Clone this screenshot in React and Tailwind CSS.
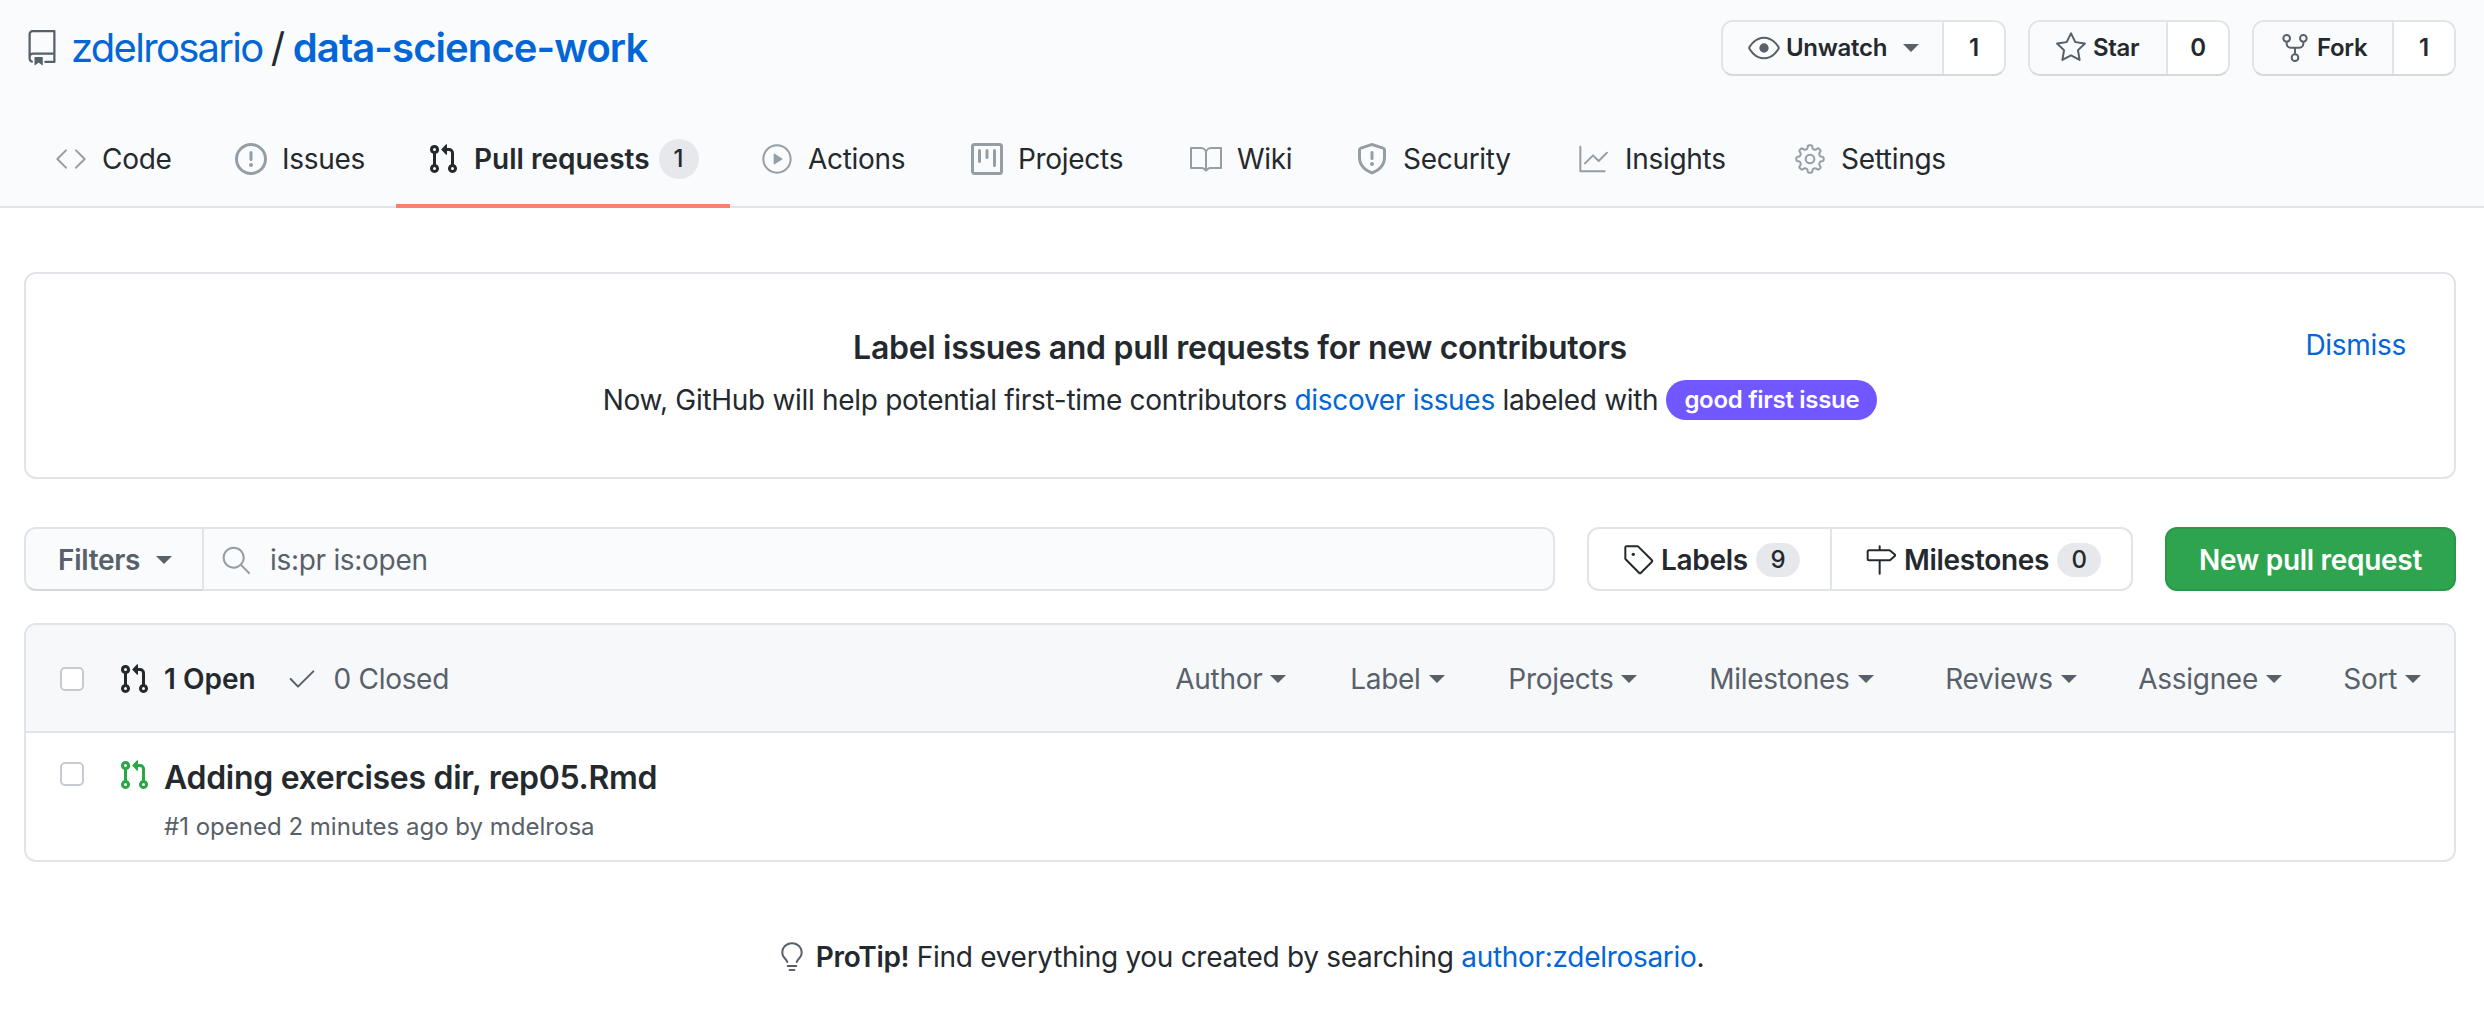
import {
  GoRepo, GoEye, GoStar, GoRepoForked, GoCode, GoPlay,
  GoBook, GoGraph, GoGear, GoTag, GoMilestone, GoSearch, GoCheck, GoLightBulb,
} from "react-icons/go";

// older octicon shapes, the ones in the package have changed since
function IssueIcon({ className, size }) {
  return (
    <svg className={className} width={size} height={size} viewBox="0 0 16 16" fill="currentColor">
      <path fillRule="evenodd" d="M8 1.5a6.5 6.5 0 100 13 6.5 6.5 0 000-13zM0 8a8 8 0 1116 0A8 8 0 010 8zm9 3a1 1 0 11-2 0 1 1 0 012 0zm-.25-6.25a.75.75 0 00-1.5 0v3.5a.75.75 0 001.5 0v-3.5z" />
    </svg>
  );
}

function ProjectIcon({ className, size }) {
  return (
    <svg className={className} width={size} height={size} viewBox="0 0 16 16" fill="currentColor">
      <path fillRule="evenodd" d="M1.75 0A1.75 1.75 0 000 1.75v12.5C0 15.216.784 16 1.75 16h12.5A1.75 1.75 0 0016 14.25V1.75A1.75 1.75 0 0014.25 0H1.75zM1.5 1.75a.25.25 0 01.25-.25h12.5a.25.25 0 01.25.25v12.5a.25.25 0 01-.25.25H1.75a.25.25 0 01-.25-.25V1.75zM11.75 3a.75.75 0 00-.75.75v7.5a.75.75 0 001.5 0v-7.5a.75.75 0 00-.75-.75zm-8.25.75a.75.75 0 011.5 0v5.5a.75.75 0 01-1.5 0v-5.5zM8 3a.75.75 0 00-.75.75v3.5a.75.75 0 001.5 0v-3.5A.75.75 0 008 3z" />
    </svg>
  );
}

function ShieldIcon({ className, size }) {
  return (
    <svg className={className} width={size} height={size} viewBox="0 0 16 16" fill="currentColor">
      <path fillRule="evenodd" d="M7.467.133a1.75 1.75 0 011.066 0l5.25 1.68A1.75 1.75 0 0115 3.48V7c0 1.566-.32 3.182-1.303 4.682-.983 1.498-2.585 2.813-5.032 3.855a1.7 1.7 0 01-1.33 0c-2.447-1.042-4.049-2.357-5.032-3.855C1.32 10.182 1 8.566 1 7V3.48a1.75 1.75 0 011.217-1.667l5.25-1.68zm.61 1.429a.25.25 0 00-.153 0l-5.25 1.68a.25.25 0 00-.174.238V7c0 1.358.275 2.666 1.057 3.86.784 1.194 2.121 2.34 4.366 3.297a.2.2 0 00.154 0c2.245-.956 3.582-2.104 4.366-3.298C13.225 9.666 13.5 8.36 13.5 7V3.48a.25.25 0 00-.174-.237l-5.25-1.68zM9 10.5a1 1 0 11-2 0 1 1 0 012 0zm-.25-5.75a.75.75 0 10-1.5 0v3a.75.75 0 001.5 0v-3z" />
    </svg>
  );
}

function PullIcon({ className, size }) {
  return (
    <svg className={className} width={size} height={size} viewBox="0 0 16 16" fill="currentColor">
      <path fillRule="evenodd" d="M7.177 3.073L9.573.677A.25.25 0 0110 .854v4.792a.25.25 0 01-.427.177L7.177 3.427a.25.25 0 010-.354zM3.75 2.5a.75.75 0 100 1.5.75.75 0 000-1.5zm-2.25.75a2.25 2.25 0 113 2.122v5.256a2.251 2.251 0 11-1.5 0V5.372A2.25 2.25 0 011.5 3.25zM11 2.5h-1V4h1a1 1 0 011 1v5.628a2.251 2.251 0 101.5 0V5A2.5 2.5 0 0011 2.5zm1 10.25a.75.75 0 111.5 0 .75.75 0 01-1.5 0zM3.75 12a.75.75 0 100 1.5.75.75 0 000-1.5z" />
    </svg>
  );
}

const tabs = [
  { label: "Code", icon: GoCode, width: "w-[180px]" },
  { label: "Issues", icon: IssueIcon, width: "w-[192px]" },
  { label: "Pull requests", icon: PullIcon, count: 1, active: true, width: "w-[334px]" },
  { label: "Actions", icon: GoPlay, width: "w-[210px]" },
  { label: "Projects", icon: ProjectIcon, width: "w-[219px]" },
  { label: "Wiki", icon: GoBook, width: "w-[166px]" },
  { label: "Security", icon: ShieldIcon, width: "w-[222px]" },
  { label: "Insights", icon: GoGraph, width: "w-[216px]" },
  { label: "Settings", icon: GoGear, width: "w-[216px]" },
];

const repoActions = [
  { label: "Unwatch", icon: GoEye, count: 1, caret: true, width: "w-[221px]" },
  { label: "Star", icon: GoStar, count: 0, width: "w-[138px]" },
  { label: "Fork", icon: GoRepoForked, count: 1, width: "w-[140px]" },
];

const filters = [
  { label: "Author", width: "w-[175px]" },
  { label: "Label", width: "w-[158px]" },
  { label: "Projects", width: "w-[201px]" },
  { label: "Milestones", width: "w-[236px]" },
  { label: "Reviews", width: "w-[193px]" },
  { label: "Assignee", width: "w-[205px]" },
  { label: "Sort", width: "" },
];

function Caret({ className }) {
  return <span className={`inline-block w-0 h-0 border-x-[8px] border-x-transparent border-t-[8px] ${className}`} />;
}

function RepoAction({ label, icon: Icon, count, caret, width }) {
  return (
    <div className="flex h-[56px] border-2 border-[#e1e4e8] border-b-[#d5d8dc] rounded-xl text-[24px] font-semibold overflow-hidden">
      <div className={`${width} flex items-center gap-[6px] pl-[25px] border-r-2 border-[#e1e4e8] text-[#24292e] bg-[#fafbfc]`}>
        <Icon className="text-[#586069] shrink-0" size={32} />
        <span>{label}</span>
        {caret && <Caret className="ml-[10px] border-t-[#586069]" />}
      </div>
      <div className="w-[60px] flex items-center justify-center bg-white text-[#24292e]">{count}</div>
    </div>
  );
}

function Tab({ label, icon: Icon, count, active, width }) {
  return (
    <div className={`${width} flex items-center h-[96px] pl-[31px] pt-[2px] border-b-4 ${active ? "border-[#f9826c] font-semibold tracking-normal" : "border-transparent"}`}>
      <Icon className={`shrink-0 mr-[15px] ${active ? "text-[#24292e]" : "text-[#959da5]"}`} size={32} />
      <span className="text-[#24292e]">{label}</span>
      {count != null && (
        <span className="ml-[9px] w-[40px] h-[40px] rounded-full bg-[#e6e8eb] flex items-center justify-center text-[24px] font-medium text-[#24292e]">{count}</span>
      )}
    </div>
  );
}

export default function App() {
  return (
    <div className="h-[1020px] overflow-hidden bg-white text-[28px] text-[#24292e] font-['Inter','Liberation_Sans',sans-serif] tracking-[-0.3px]">
      {/* Repo header */}
      <div className="h-[208px] bg-[#fafbfc] border-b-2 border-[#e1e4e8] flex flex-col">
        <div className="flex items-center justify-between pl-[24px] pr-[28px] pt-[20px] h-[76px]">
          <div className="flex items-center text-[40px] leading-none">
            <GoRepo className="text-[#586069] mr-[11px]" size={36} />
            <a className="text-[#0366d6] tracking-[-1.7px]">zdelrosario</a>
            <span className="text-[#24292e] mx-2">/</span>
            <a className="text-[#0366d6] font-semibold tracking-[-0.9px]">data-science-work</a>
          </div>
          <div className="flex gap-[22px]">
            {repoActions.map((a) => (
              <RepoAction key={a.label} {...a} />
            ))}
          </div>
        </div>
        <div className="flex pl-[24px] mt-auto -mb-[2px]">
          {tabs.map((t) => (
            <Tab key={t.label} {...t} />
          ))}
        </div>
      </div>

      <div className="px-[24px] pr-[28px]">
        {/* Banner */}
        <div className="relative mt-[64px] h-[207px] border-2 border-[#e1e4e8] rounded-xl flex flex-col items-center pt-[52px]">
          <h2 className="text-[32px] font-semibold leading-[44px]">Label issues and pull requests for new contributors</h2>
          <p className="mt-[10px] flex items-center leading-[40px]">
            Now, GitHub will help potential first-time contributors&nbsp;
            <a className="text-[#0366d6]">discover issues</a>&nbsp;labeled with
            <span className="ml-[8px] h-[40px] px-[18px] rounded-full bg-[#7057ff] text-white text-[24px] font-semibold flex items-center">good first issue</span>
          </p>
          <a className="absolute right-[48px] top-[50px] text-[#0366d6]">Dismiss</a>
        </div>

        {/* Filters */}
        <div className="mt-[48px] flex h-[64px]">
          <div className="flex flex-1">
            <div className="w-[180px] flex items-center pl-[32px] pt-[2px] gap-4 border-2 border-[#e1e4e8] border-b-[#d5d8dc] rounded-l-xl bg-[#fafbfc] font-semibold text-[#586069]">
              Filters
              <Caret className="border-t-[#586069]" />
            </div>
            <div className="flex-1 flex items-center pl-[16px] pt-[2px] border-2 border-l-0 border-[#e1e4e8] rounded-r-xl bg-[#fafbfc] text-[#586069]">
              <GoSearch className="text-[#959da5] mr-[18px]" size={32} />
              is:pr is:open
            </div>
          </div>
          <div className="ml-[32px] w-[546px] flex border-2 border-[#e1e4e8] rounded-xl font-semibold">
            <div className="w-[243px] flex items-center pl-[34px] pt-[2px] border-r-2 border-[#e1e4e8]">
              <GoTag className="mr-[6px]" size={32} />
              Labels
              <span className="ml-2 w-[44px] h-[34px] rounded-full bg-[#e6e8eb] flex items-center justify-center text-[24px] font-medium">9</span>
            </div>
            <div className="flex-1 flex items-center pl-[32px] pt-[2px]">
              <GoMilestone className="mr-[8px]" size={32} />
              Milestones
              <span className="ml-2 w-[44px] h-[34px] rounded-full bg-[#e6e8eb] flex items-center justify-center text-[24px] font-medium">0</span>
            </div>
          </div>
          <div className="ml-[32px] w-[291px] flex items-center justify-center pt-[2px] rounded-xl bg-[#2ea44f] border-2 border-[#2c974b] text-white font-semibold">
            New pull request
          </div>
        </div>

        {/* Issue list */}
        <div className="mt-[32px] h-[239px] border-2 border-[#e1e4e8] rounded-xl overflow-hidden">
          <div className="h-[108px] bg-[#f6f8fa] border-b-2 border-[#e1e4e8] flex items-center pl-[34px] pr-[33px] pt-[2px]">
            <span className="w-[24px] h-[24px] rounded-[5px] border-2 border-[#c6cbd1] bg-white" />
            <PullIcon className="ml-[34px] mr-[14px]" size={32} />
            <span className="font-semibold tracking-normal">1 Open</span>
            <GoCheck className="ml-[30px] mr-[16px] text-[#586069]" size={32} />
            <span className="text-[#586069]">0 Closed</span>
            <div className="ml-auto flex text-[#586069]">
              {filters.map((f) => (
                <div key={f.label} className={`${f.width} flex items-center gap-2`}>
                  {f.label}
                  <Caret className="border-t-[#586069]" />
                </div>
              ))}
            </div>
          </div>
          <div className="flex items-start pl-[34px] pt-[23px]">
            <span className="mt-[6px] w-[24px] h-[24px] rounded-[5px] border-2 border-[#c6cbd1] bg-white" />
            <PullIcon className="ml-[34px] mr-[14px] mt-[3px] text-[#28a745]" size={32} />
            <div>
              <div className="text-[32px] font-semibold leading-[44px]">Adding exercises dir, rep05.Rmd</div>
              <div className="mt-[11px] text-[24px] leading-[32px] text-[#586069] tracking-normal">#1 opened 2 minutes ago by mdelrosa</div>
            </div>
          </div>
        </div>

        {/* ProTip */}
        <div className="mt-[74px] flex items-center justify-center">
          <GoLightBulb className="text-[#586069] mr-[8px]" size={32} />
          <strong className="font-semibold">ProTip!</strong>
          <span>&nbsp;Find everything you created by searching&nbsp;</span>
          <a className="text-[#0366d6]">author:zdelrosario</a>.
        </div>
      </div>
    </div>
  );
}
